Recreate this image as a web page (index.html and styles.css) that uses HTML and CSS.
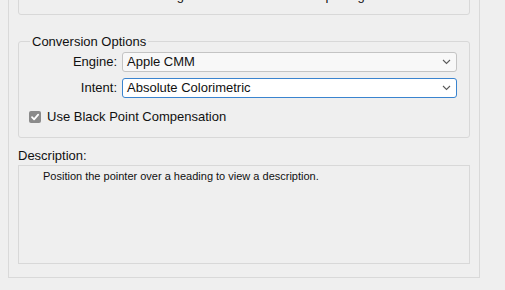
FILE: index.html
```html
<!DOCTYPE html>
<html>
<head>
<meta charset="utf-8">
<link rel="stylesheet" href="styles.css">
</head>
<body>
<div class="panel">
  <div class="topbox">
    <div class="toprow">
      <span class="toplabel">Missing Profiles:</span>
      <span class="topopt">Ask When Opening</span>
    </div>
  </div>

  <div class="group">
    <div class="legend">Conversion Options</div>
    <div class="grid">
      <label class="lbl">Engine:</label>
      <div class="select">
        <span>Apple CMM</span>
        <svg class="chev" width="9" height="6" viewBox="0 0 9 6"><path d="M1 1 L4.5 4.5 L8 1" fill="none" stroke="#5a5a5a" stroke-width="1.1"/></svg>
      </div>
      <label class="lbl">Intent:</label>
      <div class="select focused">
        <span>Absolute Colorimetric</span>
        <svg class="chev" width="9" height="6" viewBox="0 0 9 6"><path d="M1 1 L4.5 4.5 L8 1" fill="none" stroke="#5a5a5a" stroke-width="1.1"/></svg>
      </div>
    </div>
    <div class="checkrow">
      <span class="checkbox"><svg width="12" height="12" viewBox="0 0 12 12"><path d="M3 6.2 L5.1 8.4 L9.2 3.6" fill="none" stroke="#ffffff" stroke-width="1.8" stroke-linecap="round" stroke-linejoin="round"/></svg></span>
      <span>Use Black Point Compensation</span>
    </div>
  </div>

  <div class="desclabel">Description:</div>
  <div class="descbox">Position the pointer over a heading to view a description.</div>
</div>
</body>
</html>
```

FILE: styles.css
```css
html, body {
  margin: 0;
  padding: 0;
  background: #efefef;
}

body {
  font-family: "Liberation Sans", Arial, sans-serif;
  font-size: 13px;
  color: #111111;
  width: 505px;
  height: 290px;
  overflow: hidden;
}

.panel {
  margin: -17px 0 0 8px;
  width: 472px;
  box-sizing: border-box;
  border: 1px solid #d9d9d9;
  border-top: none;
  padding: 0 9px 13px 9px;
}

.topbox {
  border: 1px solid #d8d8d8;
  border-radius: 3px;
  padding: 4px 10px 10px;
}

.toprow {
  display: flex;
  height: 16px;
  line-height: 16px;
  white-space: nowrap;
}

.toplabel {
  margin-left: 111px;
}

.topopt {
  margin-left: 18px;
}

.group {
  margin-top: 26px;
  border: 1px solid #d8d8d8;
  border-radius: 3px;
  padding: 0 0 12px 0;
}

.legend {
  display: table;
  margin: -8px 0 0 11px;
  padding: 0 2px;
  background: #efefef;
  line-height: 16px;
  height: 16px;
}

.grid {
  margin-top: 2px;
  display: grid;
  grid-template-columns: 98px 335px;
  column-gap: 5px;
  row-gap: 6px;
}

.lbl {
  text-align: right;
  line-height: 20px;
  height: 20px;
}

.select {
  box-sizing: border-box;
  height: 20px;
  border: 1px solid #c4c4c4;
  border-radius: 3px;
  background: #f8f8f8;
  display: flex;
  align-items: center;
  justify-content: space-between;
  padding: 0 5px 0 4px;
  line-height: 18px;
}

.select.focused {
  background: #ffffff;
  border-color: #3a84cf;
}

.chev {
  display: block;
}

.checkrow {
  margin: 11px 0 0 10px;
  display: flex;
  align-items: center;
  height: 16px;
  line-height: 16px;
}

.checkbox {
  width: 12px;
  height: 12px;
  border-radius: 2px;
  background: #8b8b8b;
  margin-right: 6px;
  display: block;
}

.checkbox svg {
  display: block;
}

.desclabel {
  margin-top: 10px;
  line-height: 16px;
  height: 16px;
}

.descbox {
  margin-top: 1px;
  box-sizing: border-box;
  height: 99px;
  border: 1px solid #d8d8d8;
  padding: 4px 0 0 24px;
  font-size: 11px;
  line-height: 13px;
}
```
